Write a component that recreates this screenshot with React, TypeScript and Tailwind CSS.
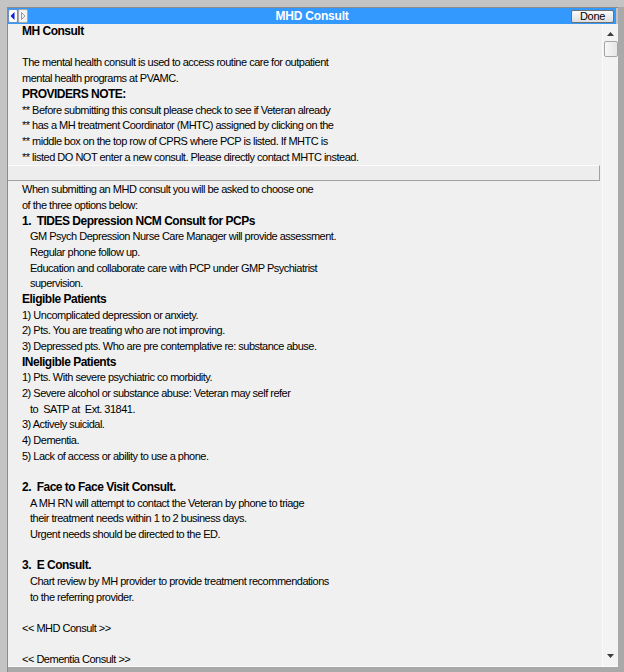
import React from "react";

type Line = [string, "n" | "b" | "i" | ""];

// upper pane (consult description)
const topLines: Line[] = [
  ["MH Consult", "b"],
  ["", ""],
  ["The mental health consult is used to access routine care for outpatient", "n"],
  ["mental health programs at PVAMC.", "n"],
  ["PROVIDERS NOTE:", "b"],
  ["** Before submitting this consult please check to see if Veteran already", "n"],
  ["** has a MH treatment Coordinator (MHTC) assigned by clicking on the", "n"],
  ["** middle box on the top row of CPRS where PCP is listed. If MHTC is", "n"],
  ["** listed DO NOT enter a new consult. Please directly contact MHTC instead.", "n"],
];

// lower pane (options)
const bottomLines: Line[] = [
  ["When submitting an MHD consult you will be asked to choose one", "n"],
  ["of the three options below:", "n"],
  ["1.  TIDES Depression NCM Consult for PCPs", "b"],
  ["GM Psych Depression Nurse Care Manager will provide assessment.", "i"],
  ["Regular phone follow up.", "i"],
  ["Education and collaborate care with PCP under GMP Psychiatrist", "i"],
  ["supervision.", "i"],
  ["Eligible Patients", "b"],
  ["1) Uncomplicated depression or anxiety.", "n"],
  ["2) Pts. You are treating who are not improving.", "n"],
  ["3) Depressed pts. Who are pre contemplative re: substance abuse.", "n"],
  ["INeligible Patients", "b"],
  ["1) Pts. With severe psychiatric co morbidity.", "n"],
  ["2) Severe alcohol or substance abuse: Veteran may self refer", "n"],
  ["to  SATP at  Ext. 31841.", "i"],
  ["3) Actively suicidal.", "n"],
  ["4) Dementia.", "n"],
  ["5) Lack of access or ability to use a phone.", "n"],
  ["", ""],
  ["2.  Face to Face Visit Consult.", "b"],
  ["A MH RN will attempt to contact the Veteran by phone to triage", "i"],
  ["their treatment needs within 1 to 2 business days.", "i"],
  ["Urgent needs should be directed to the ED.", "i"],
  ["", ""],
  ["3.  E Consult.", "b"],
  ["Chart review by MH provider to provide treatment recommendations", "i"],
  ["to the referring provider.", "i"],
  ["", ""],
  ["<< MHD Consult >>", "n"],
  ["", ""],
  ["<< Dementia Consult >>", "n"],
];

function TextLine({ line }: { line: Line }) {
  const [text, kind] = line;
  if (kind === "") return <div className="h-[1lh]">&nbsp;</div>;
  if (kind === "b")
    return (
      <div className="whitespace-pre text-[12px] font-bold tracking-[-0.5px]">
        {text}
      </div>
    );
  return (
    <div
      className={`whitespace-pre text-[11px] tracking-[-0.5px] ${
        kind === "i" ? "pl-[8px]" : ""
      }`}
    >
      {text}
    </div>
  );
}

function NavButtons() {
  return (
    <svg width="20" height="14" viewBox="0 0 20 14" className="block">
      <rect x="0.5" y="0.5" width="9" height="13" rx="1.5" fill="#ffffff" stroke="#6e8fbf" />
      <path d="M6.5 3 L2.5 7 L6.5 11 Z" fill="#0a1fd6" />
      <rect x="10.5" y="0.5" width="9" height="13" rx="1.5" fill="#f2f2f2" stroke="#a8a8a8" />
      <path d="M13.5 3.5 L17 7 L13.5 10.5 Z" fill="none" stroke="#9a9a9a" />
    </svg>
  );
}

export default function App() {
  return (
    <div className="w-[624px] h-[672px] flex bg-[#c4c4c4] pt-[7px] pl-[7px] font-['Liberation_Sans',Arial,sans-serif] text-black">
      <div className="flex-1 flex flex-col min-w-0 border-t border-l border-[#8c8c8c]">
        {/* title bar */}
        <div className="flex h-[16px]">
          <div className="flex-1 grid grid-cols-[1fr_auto_1fr] items-center bg-[#3399ff]">
            <div className="flex items-center">
              <NavButtons />
            </div>
            <div className="text-[12px] font-bold text-white tracking-[-0.2px] leading-none">
              MHD Consult
            </div>
            <div className="flex justify-end">
              <button className="w-[43px] h-[13px] mr-[2px] rounded-[2px] border border-[#707070] bg-gradient-to-b from-[#fbfbfb] to-[#dedede] text-[11px] leading-[11px] tracking-[-0.3px] text-black">
                Done
              </button>
            </div>
          </div>
          <div className="w-[2px]" />
        </div>

        {/* content */}
        <div className="flex-1 flex min-h-0 bg-[#f0f0f0]">
          <div className="flex-1 flex flex-col min-w-0 overflow-hidden">
            <div className="pl-[14px] leading-[15.7px]">
              {topLines.map((l, i) => (
                <TextLine key={i} line={l} />
              ))}
            </div>
            <div className="h-[16px] mr-[2px] shrink-0 bg-[#ededed] border-t border-t-[#fbfbfb] border-b border-r border-[#a0a0a0]" />
            <div className="pl-[14px] pt-[1px] leading-[15.67px]">
              {bottomLines.map((l, i) => (
                <TextLine key={i} line={l} />
              ))}
            </div>
          </div>

          {/* scrollbar */}
          <div className="w-[16px] flex flex-col items-center bg-[#f3f3f3] border-l border-[#fafafa]">
            <svg width="7" height="4" viewBox="0 0 7 4" className="mt-[8px]">
              <path d="M3.5 0 L7 4 L0 4 Z" fill="#3c3c3c" />
            </svg>
            <div className="mt-[5px] w-[14px] h-[16px] rounded-[2px] border border-[#a5a5a5] bg-gradient-to-r from-[#f7f7f7] to-[#e6e6e6]" />
            <div className="flex-1" />
            <svg width="7" height="4" viewBox="0 0 7 4" className="mb-[8px]">
              <path d="M0 0 L7 0 L3.5 4 Z" fill="#3c3c3c" />
            </svg>
          </div>
        </div>
        <div className="h-[6px] bg-[#a9a9a9] border-t border-[#fafafa]" />
      </div>
      <div className="w-[6px] bg-[#a9a9a9]" />
    </div>
  );
}
